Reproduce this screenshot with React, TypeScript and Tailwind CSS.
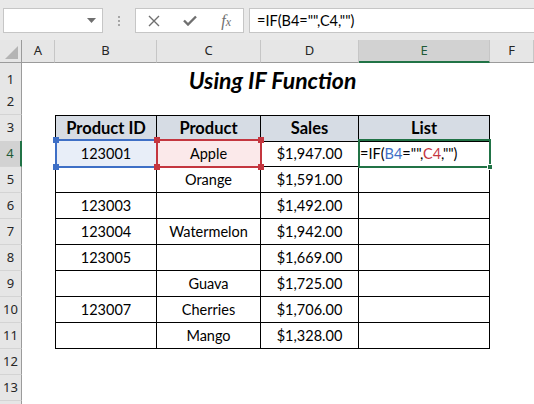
import React from 'react';

const COLS = ['A', 'B', 'C', 'D', 'E', 'F'];

const table: Record<number, string[]> = {
  3: ['Product ID', 'Product', 'Sales', 'List'],
  4: ['123001', 'Apple', '$1,947.00', ''],
  5: ['', 'Orange', '$1,591.00', ''],
  6: ['123003', '', '$1,492.00', ''],
  7: ['123004', 'Watermelon', '$1,942.00', ''],
  8: ['123005', '', '$1,669.00', ''],
  9: ['', 'Guava', '$1,725.00', ''],
  10: ['123007', 'Cherries', '$1,706.00', ''],
  11: ['', 'Mango', '$1,328.00', ''],
};

const gridCols = 'grid grid-cols-[22px_33px_102px_104px_98px_131px_1fr]';

function Handles({ color }: { color: string }) {
  const base = `absolute h-[6px] w-[6px] ${color}`;
  return (
    <>
      <span className={`${base} -left-[4px] -top-[4px]`} />
      <span className={`${base} -right-[4px] -top-[4px]`} />
      <span className={`${base} -left-[4px] -bottom-[4px]`} />
      <span className={`${base} -right-[4px] -bottom-[4px]`} />
    </>
  );
}

function Toolbar() {
  return (
    <div className="flex h-[40px] items-start bg-[#e9e9e9] pt-[8px] pl-[3px]">
      <div className="relative h-[25px] w-[100px] border border-[#c6c6c6] bg-white">
        <svg className="absolute right-[6px] top-[9px]" width="9" height="5" viewBox="0 0 9 5">
          <path d="M0 0 H9 L4.5 5 Z" fill="#6f6f6f" />
        </svg>
      </div>
      <div className="flex h-[25px] w-[32px] flex-col items-center justify-center gap-[2px]">
        <span className="h-[2px] w-[2px] bg-[#a6a6a6]" />
        <span className="h-[2px] w-[2px] bg-[#a6a6a6]" />
        <span className="h-[2px] w-[2px] bg-[#a6a6a6]" />
      </div>
      <div className="flex h-[25px] w-[109px] items-center border border-[#c6c6c6] bg-white">
        <div className="flex w-[36px] justify-center">
          <svg width="12" height="12" viewBox="0 0 12 12">
            <path d="M1 1 L11 11 M11 1 L1 11" stroke="#6f6f6f" strokeWidth="1.4" />
          </svg>
        </div>
        <div className="flex w-[38px] justify-center">
          <svg width="14" height="11" viewBox="0 0 14 11">
            <path d="M1 5.5 L5 9.5 L13 1.5" stroke="#6f6f6f" strokeWidth="2.4" fill="none" />
          </svg>
        </div>
        <div className="flex w-[34px] justify-center">
          <span className="font-['Liberation_Serif',serif] text-[16px] italic leading-none text-[#6f6f6f]">
            f<span className="text-[12px]">x</span>
          </span>
        </div>
      </div>
      <div className="ml-[5px] flex h-[25px] flex-1 items-center border border-r-0 border-[#c6c6c6] bg-white pl-[7px] font-['Lato',sans-serif] text-[14.5px] text-black">
        =IF(B4="",C4,"")
      </div>
    </div>
  );
}

function ColumnHeader() {
  return (
    <div className={`${gridCols} h-[23px] font-['Noto_Sans',sans-serif] text-[13px]`}>
      <div className="relative border-b border-r border-[#9b9b9b] bg-[#e6e6e6]">
        <svg className="absolute bottom-[3px] right-[3px]" width="13" height="13" viewBox="0 0 13 13">
          <path d="M13 0 V13 H0 Z" fill="#b4b4b4" />
        </svg>
      </div>
      {COLS.map((c) => (
        <div
          key={c}
          className={`flex items-center justify-center border-r border-[#c6c6c6] ${
            c === 'E'
              ? 'border-b-2 border-b-[#217346] bg-[#d2d2d2] text-[#1e5a37]'
              : 'border-b border-b-[#9b9b9b] bg-[#e6e6e6] text-[#262626]'
          }`}
        >
          {c}
        </div>
      ))}
    </div>
  );
}

function TableCell({ row, col, text }: { row: number; col: number; text: string }) {
  const header = row === 3;
  const borders = `border-b border-r border-black ${header ? 'border-t' : ''} ${col === 0 ? 'border-l' : ''}`;
  const fill = header ? 'bg-[#d6dce4] font-bold text-[16.5px]' : 'text-[14.5px]';
  const sel = row === 4;

  return (
    <div className={`relative flex items-center justify-center ${borders} ${fill}`}>
      {sel && col === 0 && (
        <div className="absolute -left-px -right-[2px] -top-[2px] -bottom-[2px] z-10 border-2 border-[#3e6fc6] bg-[#e8eef8]">
          <Handles color="bg-[#3e6fc6]" />
        </div>
      )}
      {sel && col === 1 && (
        <div className="absolute -left-[1px] -right-[2px] -top-[2px] -bottom-[2px] z-10 border-2 border-[#c4363f] bg-[#fbe9ea]">
          <Handles color="bg-[#c4363f]" />
        </div>
      )}
      {sel && col === 3 && (
        <div className="absolute -left-[1px] -right-[2px] -top-[2px] -bottom-[2px] z-10 border-2 border-[#217346]">
          <span className="absolute -bottom-[4px] -right-[4px] h-[6px] w-[6px] border border-white bg-[#217346]" />
        </div>
      )}
      {sel && col === 3 ? (
        <span className="relative z-20 w-full pl-[1px] text-left">
          =IF(<span className="text-[#3e6fc6]">B4</span>="",<span className="text-[#c4363f]">C4</span>,"")
        </span>
      ) : (
        <span className="relative z-20">{text}</span>
      )}
    </div>
  );
}

export default function App() {
  const rows = Array.from({ length: 13 }, (_, i) => i + 1);

  return (
    <div className="h-[404px] w-[534px] overflow-hidden bg-white font-['Lato',sans-serif] text-black">
      <Toolbar />
      <ColumnHeader />
      {rows.map((r) => (
        <div key={r} className={`${gridCols} h-[26px]`}>
          <div
            className={`flex items-center justify-center border-b border-b-[#d4d4d4] font-['Noto_Sans',sans-serif] text-[13px] ${
              r === 4
                ? 'border-r-2 border-r-[#217346] bg-[#d2d2d2] text-[#1e5a37]'
                : 'border-r border-r-[#9b9b9b] bg-[#e6e6e6] text-[#262626]'
            }`}
          >
            {r}
          </div>
          <div />
          {r === 1 ? (
            <div className="col-span-4 flex items-center justify-center text-[23px] font-bold italic">
              Using IF Function
            </div>
          ) : table[r] ? (
            table[r].map((t, i) => <TableCell key={i} row={r} col={i} text={t} />)
          ) : (
            <div className="col-span-4" />
          )}
          <div />
        </div>
      ))}
      <div className={`${gridCols} h-[3px]`}>
        <div className="border-r border-r-[#9b9b9b] bg-[#e6e6e6]" />
      </div>
    </div>
  );
}
